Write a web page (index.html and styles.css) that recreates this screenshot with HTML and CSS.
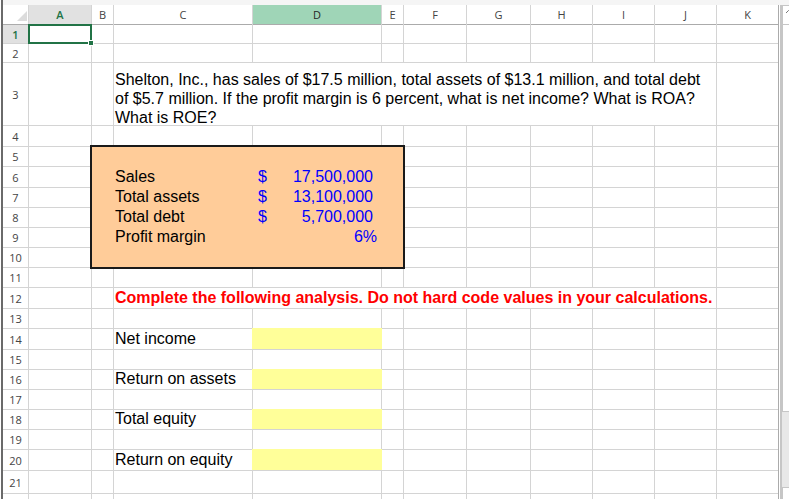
FILE: index.html
```html
<!DOCTYPE html>
<html>
<head>
<meta charset="utf-8">
<title>Sheet</title>
<link rel="stylesheet" href="styles.css">
</head>
<body>
<div class="edge"></div>
<div class="content">
  <div class="topstrip"></div>
  <div class="workarea">
    <div class="sheet">
      <!-- column headers -->
      <div class="ch corner"><svg width="10" height="10" viewBox="0 0 10 10"><polygon points="10,0 10,10 0,10" fill="#dcdcdc"/></svg></div>
      <div class="ch selh">A</div>
      <div class="ch">B</div>
      <div class="ch">C</div>
      <div class="ch colsel">D</div>
      <div class="ch">E</div>
      <div class="ch">F</div>
      <div class="ch">G</div>
      <div class="ch">H</div>
      <div class="ch">I</div>
      <div class="ch">J</div>
      <div class="ch">K</div>

      <!-- row 1 -->
      <div class="rh selh">1</div>
      <div class="c a1"><span class="handle"></span></div>
      <div class="c"></div><div class="c"></div><div class="c"></div><div class="c"></div><div class="c"></div><div class="c"></div><div class="c"></div><div class="c"></div><div class="c"></div><div class="c"></div>

      <!-- row 2 -->
      <div class="rh">2</div>
      <div class="c"></div><div class="c"></div><div class="c"></div><div class="c"></div><div class="c"></div><div class="c"></div><div class="c"></div><div class="c"></div><div class="c"></div><div class="c"></div><div class="c"></div>

      <!-- row 3 -->
      <div class="rh">3</div>
      <div class="c"></div><div class="c"></div>
      <div class="c span8 wrapcell"><p class="wrap">Shelton, Inc., has sales of $17.5 million, total assets of $13.1 million, and total debt<br>of $5.7 million. If the profit margin is 6 percent, what is net income? What is ROA?<br>What is ROE?</p></div>
      <div class="c"></div>

      <!-- row 4 -->
      <div class="rh">4</div>
      <div class="c"></div><div class="c"></div><div class="c"></div><div class="c"></div><div class="c"></div><div class="c"></div><div class="c"></div><div class="c"></div><div class="c"></div><div class="c"></div><div class="c"></div>

      <!-- row 5 -->
      <div class="rh">5</div>
      <div class="c"></div>
      <div class="box">
        <div class="t lbl r6">Sales</div>
        <div class="t acct r6"><span>$</span><span>17,500,000</span></div>
        <div class="t lbl r7">Total assets</div>
        <div class="t acct r7"><span>$</span><span>13,100,000</span></div>
        <div class="t lbl r8">Total debt</div>
        <div class="t acct r8"><span>$</span><span>5,700,000</span></div>
        <div class="t lbl r9">Profit margin</div>
        <div class="t pct r9">6%</div>
      </div>
      <div class="c"></div><div class="c"></div><div class="c"></div><div class="c"></div><div class="c"></div><div class="c"></div>

      <!-- rows 6-10 -->
      <div class="rh">6</div>
      <div class="c"></div><div class="c"></div><div class="c"></div><div class="c"></div><div class="c"></div><div class="c"></div><div class="c"></div>
      <div class="rh">7</div>
      <div class="c"></div><div class="c"></div><div class="c"></div><div class="c"></div><div class="c"></div><div class="c"></div><div class="c"></div>
      <div class="rh">8</div>
      <div class="c"></div><div class="c"></div><div class="c"></div><div class="c"></div><div class="c"></div><div class="c"></div><div class="c"></div>
      <div class="rh">9</div>
      <div class="c"></div><div class="c"></div><div class="c"></div><div class="c"></div><div class="c"></div><div class="c"></div><div class="c"></div>
      <div class="rh">10</div>
      <div class="c"></div><div class="c"></div><div class="c"></div><div class="c"></div><div class="c"></div><div class="c"></div><div class="c"></div>

      <!-- row 11 -->
      <div class="rh">11</div>
      <div class="c"></div><div class="c"></div><div class="c"></div><div class="c"></div><div class="c"></div><div class="c"></div><div class="c"></div><div class="c"></div><div class="c"></div><div class="c"></div><div class="c"></div>

      <!-- row 12 -->
      <div class="rh">12</div>
      <div class="c"></div><div class="c"></div>
      <div class="c t span8 red">Complete the following analysis. Do not hard code values in your calculations.</div>
      <div class="c"></div>

      <!-- row 13 -->
      <div class="rh">13</div>
      <div class="c"></div><div class="c"></div><div class="c"></div><div class="c"></div><div class="c"></div><div class="c"></div><div class="c"></div><div class="c"></div><div class="c"></div><div class="c"></div><div class="c"></div>

      <!-- row 14 -->
      <div class="rh">14</div>
      <div class="c"></div><div class="c"></div>
      <div class="c t">Net income</div>
      <div class="c input"></div>
      <div class="c"></div><div class="c"></div><div class="c"></div><div class="c"></div><div class="c"></div><div class="c"></div><div class="c"></div>

      <!-- row 15 -->
      <div class="rh">15</div>
      <div class="c"></div><div class="c"></div><div class="c"></div><div class="c"></div><div class="c"></div><div class="c"></div><div class="c"></div><div class="c"></div><div class="c"></div><div class="c"></div><div class="c"></div>

      <!-- row 16 -->
      <div class="rh">16</div>
      <div class="c"></div><div class="c"></div>
      <div class="c t">Return on assets</div>
      <div class="c input"></div>
      <div class="c"></div><div class="c"></div><div class="c"></div><div class="c"></div><div class="c"></div><div class="c"></div><div class="c"></div>

      <!-- row 17 -->
      <div class="rh">17</div>
      <div class="c"></div><div class="c"></div><div class="c"></div><div class="c"></div><div class="c"></div><div class="c"></div><div class="c"></div><div class="c"></div><div class="c"></div><div class="c"></div><div class="c"></div>

      <!-- row 18 -->
      <div class="rh">18</div>
      <div class="c"></div><div class="c"></div>
      <div class="c t">Total equity</div>
      <div class="c input"></div>
      <div class="c"></div><div class="c"></div><div class="c"></div><div class="c"></div><div class="c"></div><div class="c"></div><div class="c"></div>

      <!-- row 19 -->
      <div class="rh">19</div>
      <div class="c"></div><div class="c"></div><div class="c"></div><div class="c"></div><div class="c"></div><div class="c"></div><div class="c"></div><div class="c"></div><div class="c"></div><div class="c"></div><div class="c"></div>

      <!-- row 20 -->
      <div class="rh">20</div>
      <div class="c"></div><div class="c"></div>
      <div class="c t">Return on equity</div>
      <div class="c input"></div>
      <div class="c"></div><div class="c"></div><div class="c"></div><div class="c"></div><div class="c"></div><div class="c"></div><div class="c"></div>

      <!-- row 21 -->
      <div class="rh">21</div>
      <div class="c"></div><div class="c"></div><div class="c"></div><div class="c"></div><div class="c"></div><div class="c"></div><div class="c"></div><div class="c"></div><div class="c"></div><div class="c"></div><div class="c"></div>

      <!-- row 22 -->
      <div class="rh"></div>
      <div class="c"></div><div class="c"></div><div class="c"></div><div class="c"></div><div class="c"></div><div class="c"></div><div class="c"></div><div class="c"></div><div class="c"></div><div class="c"></div><div class="c"></div>
    </div>

    <div class="vscroll">
      <div class="sb-up"><svg width="7" height="5" viewBox="0 0 7 5"><polyline points="1,4 3.5,1.5 6,4" fill="none" stroke="#777" stroke-width="1"/></svg></div>
      <div class="sb-thumb"></div>
      <div class="sb-track"></div>
      <div class="sb-down"></div>
    </div>
  </div>
</div>
</body>
</html>
```

FILE: styles.css
```css
* { box-sizing: border-box; }

html, body {
  margin: 0;
  padding: 0;
}

body {
  width: 789px;
  height: 499px;
  overflow: hidden;
  background: #ffffff;
  display: flex;
  font-family: "Liberation Sans", Arial, sans-serif;
}

.edge {
  flex: none;
  width: 2px;
  margin-left: 1px;
  background: #6a6a6a;
}

.content {
  flex: none;
  width: 786px;
  display: flex;
  flex-direction: column;
}

.topstrip {
  flex: none;
  height: 5px;
  background: #f5f5f5;
}

.workarea {
  display: flex;
  flex: 1;
  min-height: 0;
}

.sheet {
  flex: none;
  align-self: flex-start;
  display: grid;
  grid-template-columns: 25px 62px 21px 138px 128px 21px 62px 63px 61px 61px 61px 61px;
  grid-template-rows: 19px 18px 18px 62px 20px 19px 20px 19px 19px 19px 19px 19px 20px 19px 20px 19px 19px 19px 19px 19px 20px 22px 20px;
  gap: 1px;
  background: #d4d4d4;
  border-right: 1px solid #ababab;
}

/* headers */
.ch, .rh {
  background: #ffffff;
  color: #444444;
  font-family: "Open Sans", "Noto Sans", sans-serif;
  display: flex;
  align-items: center;
  justify-content: center;
}

.ch {
  font-size: 11px;
  box-shadow: 0 1px 0 #ababab;
}

.rh {
  font-size: 11px;
}

.corner {
  align-items: flex-end;
  justify-content: flex-end;
  padding: 0 1px 3px 0;
}

.corner svg { display: block; }

.selh {
  background: #e1e1e1;
  color: #217346;
  font-weight: 600;
}

.colsel {
  background: #9fd5b7;
  color: #262626;
}

/* cells */
.c {
  background: #ffffff;
}

.t {
  font-size: 16px;
  line-height: 18px;
  color: #000000;
  display: flex;
  align-items: flex-end;
  padding: 0 1px 1px 1px;
  white-space: nowrap;
}

.wrapcell {
  display: flex;
  flex-direction: column;
  justify-content: flex-end;
  padding: 0 1px;
}

.wrap {
  margin: 0 0 -2px 0;
  font-size: 16px;
  line-height: 19px;
  color: #000000;
  white-space: nowrap;
}

.span8 {
  grid-column: span 8;
}

.red {
  color: #ff0000;
  font-weight: bold;
}

.input {
  background: #ffff99;
  margin: -1px -1px 0 -1px;
}

.a1 {
  position: relative;
  outline: 2px solid #217346;
  outline-offset: -1px;
  z-index: 2;
}

.handle {
  position: absolute;
  right: -3px;
  bottom: -3px;
  width: 6px;
  height: 6px;
  background: #217346;
  border: 1px solid #ffffff;
}

/* orange data box */
.box {
  grid-column: 3 / 7;
  grid-row: 6 / 12;
  background: #ffcc99;
  outline: 2px solid #1a1a1a;
  z-index: 1;
  display: grid;
  grid-template-columns: 21px 138px 128px 21px;
  grid-template-rows: 19px 20px 19px 19px 19px 19px;
  gap: 1px;
}

.lbl { grid-column: 2; }
.acct, .pct { grid-column: 3; color: #0000ff; }
.r6 { grid-row: 2; }
.r7 { grid-row: 3; }
.r8 { grid-row: 4; }
.r9 { grid-row: 5; }

.acct {
  justify-content: space-between;
  padding: 0 8px 1px 5px;
}

.pct {
  justify-content: flex-end;
  padding: 0 4px 1px 0;
}

/* vertical scrollbar */
.vscroll {
  flex: none;
  width: 9px;
  margin-left: 1px;
  border-left: 2px solid #c6c6c6;
  display: flex;
  flex-direction: column;
}

.sb-up {
  flex: none;
  height: 19px;
  border-left: 1px solid #c6c6c6;
  border-top: 1px solid #c6c6c6;
  background: #ffffff;
  padding: 3px 0 0 2px;
}

.sb-up svg { display: block; }

.sb-thumb {
  flex: none;
  height: 388px;
  border-left: 1px solid #c6c6c6;
  border-top: 1px solid #c6c6c6;
  border-bottom: 1px solid #c6c6c6;
  background: #ffffff;
}

.sb-track {
  flex: none;
  height: 75px;
  background: #e8e8e8;
}

.sb-down {
  flex: 1;
  border-left: 1px solid #c6c6c6;
  border-top: 1px solid #c6c6c6;
  background: #ffffff;
}
```
